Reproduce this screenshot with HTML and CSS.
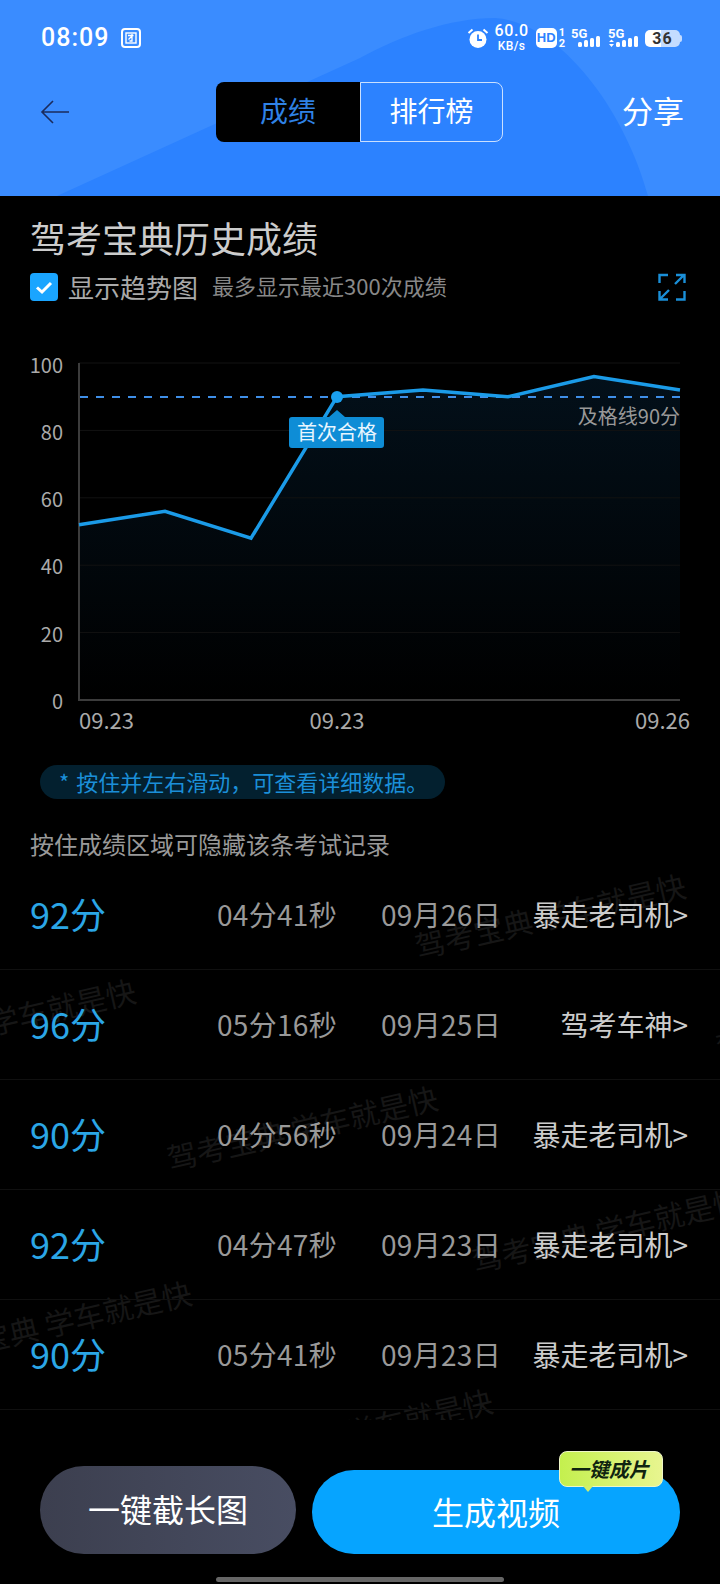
FILE: index.html
```html
<!DOCTYPE html>
<html lang="zh-CN">
<head>
  <meta charset="UTF-8" />
  <meta name="viewport" content="width=device-width, initial-scale=1.0"/>
  <title>驾考宝典历史成绩</title>
  <link rel="stylesheet" href="styles.css">
</head>
<body>
  <div class="page">
    <header class="top">
      <svg class="top-shape" viewBox="0 0 720 196" width="720" height="196">
        <path d="M57 196 L360 58 C400 36 450 18 495 18 C560 22 625 110 648 196 Z" fill="#2c82ff"/>
      </svg>

      <div class="status">
        <span class="clock">08:09</span>
        <svg class="sim" width="20" height="20" viewBox="0 0 20 20" fill="none" stroke="#fff">
          <rect x="1" y="1" width="18" height="18" rx="3" stroke-width="2"/>
          <rect x="5" y="5" width="10" height="10" stroke-width="1.4"/>
          <path d="M7 7.5 H12.5 M11 6 V13 H8.5 M10.5 8.5 L7.5 11.5" stroke-width="1.3"/>
        </svg>
        <div class="status-right">
          <svg width="22" height="22" viewBox="0 0 22 22">
            <circle cx="11" cy="12.5" r="8.5" fill="#fff"/>
            <path d="M11 7.5 V13 H15" fill="none" stroke="#2c82ff" stroke-width="1.8"/>
            <path d="M1.5 6 L5.5 2.5 M20.5 6 L16.5 2.5" stroke="#fff" stroke-width="2"/>
          </svg>
          <div class="speed"><span class="speed-num">60.0</span><span class="speed-unit">KB/s</span></div>
          <div class="hd"><span class="hd-box">HD</span><span class="hd-sims"><span>1</span><span>2</span></span></div>
          <svg class="net" width="31" height="24" viewBox="0 -4 31 24" fill="#fff">
            <text x="0" y="10" class="net-text">5G</text>
            <rect x="7" y="14" width="4" height="5" rx="1.5"/>
            <rect x="13" y="12" width="4" height="7" rx="1.5"/>
            <rect x="19" y="10" width="4" height="9" rx="1.5"/>
            <rect x="25" y="8" width="4" height="11" rx="1.5"/>
          </svg>
          <svg class="net" width="31" height="24" viewBox="0 -4 31 24" fill="#fff">
            <text x="0" y="10" class="net-text">5G</text>
            <path d="M1 14 H6 L3.5 11.5 Z M1 16 H6 L3.5 19 Z"/>
            <rect x="8" y="14" width="4" height="5" rx="1.5"/>
            <rect x="14" y="12" width="4" height="7" rx="1.5"/>
            <rect x="20" y="10" width="4" height="9" rx="1.5"/>
            <rect x="26" y="8" width="4" height="11" rx="1.5"/>
          </svg>
          <div class="battery"><span class="battery-num">36</span></div>
        </div>
      </div>

      <nav class="nav">
        <svg class="back" width="30" height="26" viewBox="0 0 30 26" fill="none" stroke="#1b2b5c" stroke-width="1.6">
          <path d="M29 13 H2 M13 2 L2 13 L13 24"/>
        </svg>
        <div class="tabs">
          <span class="tab tab-active">成绩</span>
          <span class="tab">排行榜</span>
        </div>
        <span class="share">分享</span>
      </nav>
    </header>

    <h1 class="title">驾考宝典历史成绩</h1>
    <div class="options">
      <svg width="28" height="28" viewBox="0 0 28 28">
        <rect width="28" height="28" rx="4" fill="#1aa5ff"/>
        <path d="M7 14.5 L12 19 L21 10" fill="none" stroke="#fff" stroke-width="3"/>
      </svg>
      <span class="option-label">显示趋势图</span>
      <span class="option-note">最多显示最近300次成绩</span>
      <svg class="expand" width="28" height="28" viewBox="0 0 28 28" fill="none" stroke="#1a8fd8" stroke-width="2.4">
        <path d="M1.5 10 V2 H10 M18 2 H26.5 V10 M26 2 L17 11 M1.5 18 V26.5 H10 M2 26 L11 17 M18 26.5 H26.5 V18"/>
      </svg>
    </div>

    <svg class="chart" viewBox="0 340 720 400" width="720" height="400">
      <defs>
        <linearGradient id="areaFill" x1="0" y1="0" x2="0" y2="1">
          <stop offset="0" stop-color="#03101a"/>
          <stop offset="1" stop-color="#000"/>
        </linearGradient>
      </defs>
      <path d="M79 524.8 L165 511.3 L251 538.2 L337 396.7 L423 390 L508 396.7 L594 376.5 L680 390 V700 H79 Z" fill="url(#areaFill)"/>
      <g class="grid">
        <line x1="79" y1="363" x2="680" y2="363"/>
        <line x1="79" y1="430.4" x2="680" y2="430.4"/>
        <line x1="79" y1="497.8" x2="680" y2="497.8"/>
        <line x1="79" y1="565.2" x2="680" y2="565.2"/>
        <line x1="79" y1="632.6" x2="680" y2="632.6"/>
      </g>
      <path class="axis" d="M79 363 V700 H680"/>
      <line class="pass-line" x1="80" y1="397" x2="680" y2="397"/>
      <path class="score-line" d="M79 524.8 L165 511.3 L251 538.2 L337 396.7 L423 390 L508 396.7 L594 376.5 L680 390"/>
      <circle cx="337" cy="397" r="6" fill="#1aa0f0"/>

      <g class="y-labels">
        <text x="63" y="372.5">100</text>
        <text x="63" y="439.5">80</text>
        <text x="63" y="507">60</text>
        <text x="63" y="574">40</text>
        <text x="63" y="641.5">20</text>
        <text x="63" y="709">0</text>
      </g>
      <g class="x-labels">
        <text x="79" y="729">09.23</text>
        <text x="337" y="729" text-anchor="middle">09.23</text>
        <text x="690" y="729" text-anchor="end">09.26</text>
      </g>
      <text class="pass-label" x="680" y="424" text-anchor="end">及格线90分</text>

      <path d="M292 417 H329 L337 410 L345 417 H381 a3 3 0 0 1 3 3 V445 a3 3 0 0 1 -3 3 H292 a3 3 0 0 1 -3 -3 V420 a3 3 0 0 1 3 -3 Z" fill="#0e8dd6"/>
      <text class="tag-text" x="337" y="440" text-anchor="middle">首次合格</text>
    </svg>

    <div class="hint">* 按住并左右滑动，可查看详细数据。</div>
    <p class="note">按住成绩区域可隐藏该条考试记录</p>

    <div class="list">
      <span class="wm wm-1">驾考宝典 学车就是快</span>
      <span class="wm wm-2">驾考宝典 学车就是快</span>
      <span class="wm wm-3">驾考宝典 学车就是快</span>
      <span class="wm wm-4">驾考宝典 学车就是快</span>
      <span class="wm wm-5">驾考宝典 学车就是快</span>
      <span class="wm wm-6">驾考宝典 学车就是快</span>
      <span class="wm wm-7">驾考宝典 学车就是快</span>

      <div class="row">
        <span class="score">92分</span><span class="cell">04分41秒</span><span class="cell">09月26日</span><span class="rank">暴走老司机&gt;</span>
      </div>
      <div class="row">
        <span class="score">96分</span><span class="cell">05分16秒</span><span class="cell">09月25日</span><span class="rank">驾考车神&gt;</span>
      </div>
      <div class="row">
        <span class="score">90分</span><span class="cell">04分56秒</span><span class="cell">09月24日</span><span class="rank">暴走老司机&gt;</span>
      </div>
      <div class="row">
        <span class="score">92分</span><span class="cell">04分47秒</span><span class="cell">09月23日</span><span class="rank">暴走老司机&gt;</span>
      </div>
      <div class="row">
        <span class="score">90分</span><span class="cell">05分41秒</span><span class="cell">09月23日</span><span class="rank">暴走老司机&gt;</span>
      </div>
    </div>

    <footer class="bottom">
      <div class="actions">
        <button class="btn btn-dark">一键截长图</button>
        <button class="btn btn-blue">生成视频
          <span class="badge">一键成片</span>
        </button>
      </div>
      <div class="home-bar"></div>
    </footer>
  </div>
</body>
</html>
```

FILE: styles.css
```css
* { box-sizing: border-box; }
body {
  margin: 0;
  background: #000;
  font-family: "Noto Sans CJK SC", "Noto Sans", sans-serif;
}
.page { width: 720px; height: 1584px; overflow: hidden; background: #000; }

/* header */
.top {
  position: relative;
  height: 196px;
  background: #3a8cff;
  color: #fff;
}
.top-shape { position: absolute; left: 0; top: 0; }
.status {
  position: relative;
  display: flex;
  align-items: center;
  height: 56px;
  padding: 20px 40px 0 41px;
}
.clock {
  font-family: Roboto, sans-serif;
  font-size: 25px;
  font-weight: 500;
  letter-spacing: 1px;
  line-height: 30px;
}
.sim { margin-left: 12px; }
.status-right {
  display: flex;
  align-items: center;
  gap: 6px;
  margin-left: auto;
}
.speed {
  display: flex;
  flex-direction: column;
  align-items: center;
  margin-right: 1px;
  font-family: Roboto, sans-serif;
  font-weight: 500;
}
.speed-num { font-size: 16px; line-height: 16px; letter-spacing: 0.6px; }
.speed-unit { font-size: 12px; line-height: 14px; letter-spacing: 0.4px; }
.hd { display: flex; align-items: center; gap: 2px; }
.hd-box {
  width: 21px;
  height: 20px;
  border-radius: 5px;
  background: #fff;
  color: #2c82ff;
  font-family: "Liberation Sans", sans-serif;
  font-size: 13px;
  font-weight: 700;
  line-height: 20px;
  text-align: center;
}
.hd-sims {
  display: flex;
  flex-direction: column;
  font-family: Roboto, sans-serif;
  font-size: 11px;
  font-weight: 700;
  line-height: 11px;
}
.net { margin-top: -4px; }
.net-text {
  font-family: Roboto, sans-serif;
  font-size: 13px;
  font-weight: 700;
}
.battery {
  position: relative;
  width: 35px;
  height: 17px;
  border-radius: 5px;
  background: linear-gradient(90deg, #fff 0, #fff 45%, #c4dcff 45%, #c4dcff 100%);
}
.battery::after {
  content: "";
  position: absolute;
  right: -2px;
  top: 5px;
  width: 2px;
  height: 7px;
  border-radius: 0 2px 2px 0;
  background: #c4dcff;
}
.battery-num {
  display: block;
  color: #333;
  font-family: Roboto, sans-serif;
  font-size: 16px;
  font-weight: 700;
  line-height: 17px;
  letter-spacing: 1px;
  text-align: center;
}
.nav {
  position: relative;
  display: flex;
  align-items: center;
  height: 60px;
  margin-top: 26px;
  padding: 0 36px 0 40px;
}
.tabs {
  display: flex;
  height: 60px;
  margin-left: 146px;
  border-radius: 8px;
}
.tab {
  width: 143px;
  border: 1px solid rgba(255, 255, 255, 0.75);
  border-radius: 0 8px 8px 0;
  font-size: 28px;
  line-height: 54px;
  text-align: center;
}
.tab-active {
  width: 144px;
  border: 0;
  border-radius: 8px 0 0 8px;
  background: #000;
  color: #2f82e6;
  line-height: 56px;
}
.share { margin-left: auto; margin-bottom: 4px; font-size: 31px; line-height: 56px; }

/* title and options */
.title {
  margin: 19px 0 0 30px;
  color: #ccc;
  font-size: 36px;
  font-weight: 400;
  line-height: 44px;
}
.options {
  display: flex;
  align-items: center;
  height: 28px;
  margin-top: 14px;
  padding: 0 34px 0 30px;
}
.option-label { margin: 0 0 2px 10px; color: #aaa; font-size: 26px; }
.option-note { margin: 0 0 4px 14px; color: #888; font-size: 22px; }
.expand { margin-left: auto; }

/* chart */
.chart { display: block; margin-top: 39px; }
.grid line { stroke: #121212; stroke-width: 1; }
.axis { fill: none; stroke: #3c3c3c; stroke-width: 2; }
.pass-line { stroke: #3f8fe8; stroke-width: 2; stroke-dasharray: 8 8; }
.score-line { fill: none; stroke: #1b9be8; stroke-width: 3.5; }
.y-labels text { fill: #aaa; font-size: 20px; text-anchor: end; }
.x-labels text { fill: #aaa; font-size: 22px; }
.pass-label { fill: #999; font-size: 20px; }
.tag-text { fill: #e8f6ff; font-size: 20px; }

.hint {
  width: 405px;
  height: 34px;
  margin: 25px 0 0 40px;
  padding-left: 19px;
  border-radius: 17px;
  background: #03202f;
  color: #1b8fd8;
  font-size: 22px;
  line-height: 32px;
  word-spacing: 2px;
  white-space: nowrap;
}
.note {
  margin: 30px 0 1px 30px;
  color: #999;
  font-size: 24px;
  line-height: 30px;
}

/* score list */
.list {
  position: relative;
  isolation: isolate;
  height: 560px;
  overflow: hidden;
}
.wm {
  position: absolute;
  z-index: -1;
  color: #161616;
  font-size: 30px;
  line-height: 40px;
  white-space: nowrap;
  transform: translate(-50%, -50%) rotate(-13deg);
}
.wm-1 { left: 550px; top: 55px; }
.wm-2 { left: 0; top: 160px; }
.wm-3 { left: 302px; top: 267px; }
.wm-4 { left: 607px; top: 369px; }
.wm-5 { left: 56px; top: 462px; }
.wm-6 { left: 357px; top: 570px; }
.wm-7 { left: 851px; top: 155px; }
.row {
  display: grid;
  grid-template-columns: 187px 119px 45px 120px 1fr;
  align-items: center;
  height: 110px;
  padding: 0 32px 0 30px;
  border-bottom: 1px solid #101010;
}
.score { margin-bottom: 4px; color: #2ba6e6; font-size: 36px; line-height: 44px; white-space: nowrap; }
.cell { margin-bottom: 2px; color: #999; font-size: 28px; line-height: 40px; letter-spacing: 0.3px; text-align: center; white-space: nowrap; }
.cell + .cell { grid-column: 4; }
.rank { margin-bottom: 2px; color: #ccc; font-size: 28px; line-height: 40px; text-align: right; white-space: nowrap; }

/* bottom buttons */
.bottom { height: 164px; padding: 46px 40px 0; }
.actions { display: flex; align-items: flex-end; gap: 16px; }
.btn {
  position: relative;
  height: 88px;
  border: 0;
  border-radius: 44px;
  color: #fff;
  font-family: inherit;
  font-size: 32px;
  padding: 0 0 5px;
}
.btn-dark { width: 256px; background: linear-gradient(90deg, #3c3f4f, #484d62); }
.btn-blue { width: 368px; height: 84px; padding-bottom: 3px; background: #06a4ff; }
.badge {
  position: absolute;
  right: 17px;
  top: -19px;
  width: 104px;
  height: 36px;
  padding-right: 4px;
  border: 1px solid #eef6c8;
  border-radius: 8px;
  background: linear-gradient(90deg, #c4f04e, #e8f590);
  color: #0f2410;
  font-size: 20px;
  font-weight: 700;
  font-style: italic;
  line-height: 33px;
  text-align: center;
}
.badge::after {
  content: "";
  position: absolute;
  left: 23px;
  top: 34px;
  width: 0;
  height: 0;
  border-left: 5px solid transparent;
  border-right: 5px solid transparent;
  border-top: 6px solid #d2f06a;
}
.home-bar {
  width: 288px;
  height: 5px;
  margin: 23px auto 0;
  border-radius: 3px;
  background: #666;
}
```
